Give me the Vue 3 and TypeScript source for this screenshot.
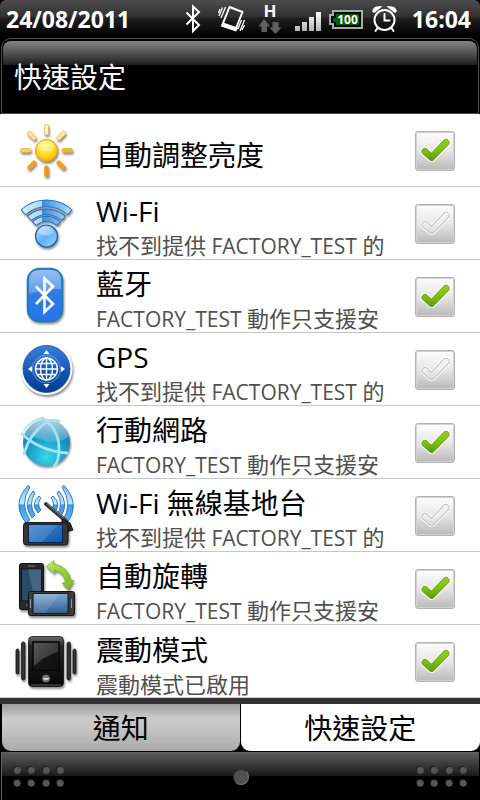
<script setup lang="ts">
import { ref } from 'vue'

interface Setting {
  id: string
  title: string
  note?: string
  on: boolean
}

const settings = ref<Setting[]>([
  { id: 'brightness', title: '自動調整亮度', on: true },
  { id: 'wifi', title: 'Wi-Fi', note: '找不到提供 FACTORY_TEST 的', on: false },
  { id: 'bluetooth', title: '藍牙', note: 'FACTORY_TEST 動作只支援安', on: true },
  { id: 'gps', title: 'GPS', note: '找不到提供 FACTORY_TEST 的', on: false },
  { id: 'mobile', title: '行動網路', note: 'FACTORY_TEST 動作只支援安', on: true },
  { id: 'hotspot', title: 'Wi-Fi 無線基地台', note: '找不到提供 FACTORY_TEST 的', on: false },
  { id: 'rotate', title: '自動旋轉', note: 'FACTORY_TEST 動作只支援安', on: true },
  { id: 'vibrate', title: '震動模式', note: '震動模式已啟用', on: true },
])

// Latin runs are set a little smaller than the Chinese text around them.
const isLatin = (run: string) => /^[\w ]+$/.test(run)
const runsOf = (note: string) => note.split(/( ?[\w]+ ?)/).filter(Boolean)

const activeTab = ref<'notices' | 'quick'>('quick')

const rays = [
  { angle: 0, color: '#fff3c0' },
  { angle: 45, color: '#ffec8a' },
  { angle: 90, color: '#e3c21c' },
  { angle: 135, color: '#f79a1c' },
  { angle: 180, color: '#f98f10' },
  { angle: 225, color: '#fba01e' },
  { angle: 270, color: '#fbd25c' },
  { angle: 315, color: '#ffe49a' },
]

const dotColumns = [5, 19, 34, 48]
const dotRows = [5, 18]
</script>

<template>
  <div class="screen">
    <header class="status">
      <span class="date">24/08/2011</span>
      <div class="status-icons">
        <svg width="30" height="38" viewBox="180 0 30 38" fill="none" stroke="#fff" stroke-width="2">
          <path d="M186.500 12.500L199 25L193 31V6.500L199 12L186.500 24.500" />
        </svg>
        <svg width="42" height="38" viewBox="210 0 42 38" fill="none" stroke="#fff">
          <path d="M229.500 7L242.500 12L235.500 29.500L222.500 24.500Z" stroke-width="2" stroke-linejoin="round" />
          <path d="M223.500 24L236.500 28.500L235.500 30L222.500 25.500Z" stroke-width="2.500" />
          <path d="M225.500 7L221 18M222.500 7.500L219 16M220 9L218.500 13M244.500 20L240 31M244.500 25L242 30M241.500 20L238 29" stroke-width="1.300" />
        </svg>
        <svg width="37" height="38" viewBox="252 0 37 38">
          <text class="net" x="270" y="17" text-anchor="middle">H</text>
          <path d="M264 19L270 26.500H267V32H261.500V26.500H258.500ZM275.500 34L269.500 27.500H272.500V22H278.500V27.500H281.500Z" fill="#606060" />
        </svg>
        <svg width="36" height="38" viewBox="289 0 36 38">
          <defs>
            <linearGradient id="barFill" x1="0" y1="12" x2="0" y2="31" gradientUnits="userSpaceOnUse">
              <stop offset="0" stop-color="#fff" /><stop offset="1" stop-color="#b4b4b4" />
            </linearGradient>
          </defs>
          <path d="M295 26h5v5h-5zM302 22h5v9h-5zM309 17h5v14h-5zM316 12h5v19h-5z" fill="url(#barFill)" />
        </svg>
        <svg width="42" height="38" viewBox="325 0 42 38">
          <path d="M333 11H362V28H333V24H330V15H333Z" fill="#000" stroke="#a9a9a9" stroke-width="2" />
          <path d="M336 14H359V25H336V22H333V18H336Z" fill="#075c07" />
          <text class="charge" x="347.500" y="24" text-anchor="middle">100</text>
        </svg>
        <svg width="37" height="38" viewBox="367 0 37 38" fill="none" stroke="#fff" stroke-width="2" stroke-linecap="round">
          <circle cx="384.500" cy="20" r="10" />
          <path d="M384.500 14V20.500H389.500M377.500 28L375.500 31M391.500 28L393.500 31" />
          <path d="M373.500 11Q374.500 7.500 379 7.500L374 11.500M395.500 11Q394.500 7.500 390 7.500L395 11.500" stroke-width="2.500" />
        </svg>
      </div>
      <time class="clock">16:04</time>
    </header>

    <div class="heading"><h1>快速設定</h1></div>

    <main class="list">
      <label v-for="item in settings" :key="item.id" class="row">
        <svg class="icon" width="92" height="72" viewBox="0 0 92 72" fill="none" aria-hidden="true">
          <g v-if="item.id === 'brightness'">
            <defs>
              <radialGradient id="sunFill" cx=".45" cy=".3" r=".75">
                <stop offset="0" stop-color="#fff48a" /><stop offset=".5" stop-color="#ffe02c" /><stop offset="1" stop-color="#f6a400" />
              </radialGradient>
            </defs>
            <g class="shadow">
              <rect v-for="ray in rays" :key="ray.angle" x="44.500" y="10.500" width="4" height="10.500" rx="1.500" :fill="ray.color" stroke="#e2a53c" stroke-width=".6" :transform="`rotate(${ray.angle} 46.500 36.500)`" />
              <circle cx="46.500" cy="36.500" r="11" fill="url(#sunFill)" stroke="#e59c10" />
            </g>
            <ellipse cx="46" cy="32" rx="8" ry="5.500" fill="#fff" opacity=".3" />
          </g>

          <g v-else-if="item.id === 'wifi'">
            <defs>
              <linearGradient id="wifiFill" x1="20" y1="0" x2="72" y2="0" gradientUnits="userSpaceOnUse">
                <stop offset="0" stop-color="#d5f1ff" /><stop offset=".42" stop-color="#a8dcfc" /><stop offset=".43" stop-color="#2f8ee8" /><stop offset="1" stop-color="#b3e2fe" />
              </linearGradient>
              <linearGradient id="wifiBall" x1="0" y1="0" x2="1" y2="1">
                <stop offset="0" stop-color="#bfe6ff" /><stop offset=".5" stop-color="#5fb2fa" /><stop offset="1" stop-color="#a0d6ff" />
              </linearGradient>
            </defs>
            <g class="shadow" stroke="#2a68ae">
              <path d="M23 25.500A34.500 34.500 0 0 1 70 25.500" stroke-width="7.500" />
              <path d="M29 31.500A26 26 0 0 1 64 31.500" stroke-width="6.500" />
              <path d="M34 37A17.500 17.500 0 0 1 59 37" stroke-width="6" />
              <circle cx="46.500" cy="49" r="11" fill="url(#wifiBall)" stroke="#1761ae" stroke-width="1.200" />
            </g>
            <g stroke="url(#wifiFill)">
              <path d="M23.700 25A34.500 34.500 0 0 1 69.300 25" stroke-width="5.800" />
              <path d="M29.700 31A26 26 0 0 1 63.300 31" stroke-width="4.800" />
              <path d="M34.700 36.400A17.500 17.500 0 0 1 58.300 36.400" stroke-width="4.300" />
            </g>
            <ellipse cx="46" cy="44" rx="7.500" ry="4.500" fill="#fff" opacity=".35" />
          </g>

          <g v-else-if="item.id === 'bluetooth'">
            <defs>
              <linearGradient id="btFill" x1="0" y1="0" x2="0" y2="1">
                <stop offset="0" stop-color="#3b83e0" /><stop offset="1" stop-color="#2276e8" />
              </linearGradient>
              <linearGradient id="btGloss" x1="0" y1="0" x2="0" y2="1">
                <stop offset="0" stop-color="#b5d3f7" /><stop offset="1" stop-color="#6aa3ec" />
              </linearGradient>
            </defs>
            <rect class="shadow" x="27.500" y="8.500" width="35" height="53" rx="12" fill="url(#btFill)" stroke="#1e7db0" stroke-width="1.500" />
            <path d="M29 34V21Q29 10 40 10H50Q61 10 61 21V29Q46 29 29 34Z" fill="url(#btGloss)" opacity=".75" />
            <path d="M36 26.500L53 44L44.500 52V18.500L53 26.500L36 44" stroke="#fff" stroke-width="2.600" />
          </g>

          <g v-else-if="item.id === 'gps'">
            <defs>
              <linearGradient id="gpsFill" x1="0" y1="0" x2="0" y2="1">
                <stop offset="0" stop-color="#3a7edb" /><stop offset=".55" stop-color="#1557b5" /><stop offset="1" stop-color="#043b8d" />
              </linearGradient>
            </defs>
            <circle class="shadow" cx="46.500" cy="36" r="26" fill="#fff" />
            <circle cx="46.500" cy="36" r="23.500" fill="url(#gpsFill)" stroke="#12479c" stroke-width=".8" />
            <g stroke="#fff" stroke-width="1.400">
              <circle cx="46.500" cy="36" r="11" />
              <ellipse cx="46.500" cy="36" rx="6" ry="11" />
              <path d="M46.500 25V47M35.500 36H57.500M37.500 30.500H55.500M37.500 41.500H55.500" />
              <circle cx="46.500" cy="36" r="14" opacity=".35" stroke-width="1" />
            </g>
            <path d="M46.500 17L49.500 21H43.500ZM46.500 55L49.500 51H43.500ZM28 36L32 33V39ZM65 36L61 33V39Z" fill="#fff" />
          </g>

          <g v-else-if="item.id === 'mobile'">
            <defs>
              <radialGradient id="netFill" cx=".5" cy=".8" r=".85">
                <stop offset="0" stop-color="#35d9ed" /><stop offset=".45" stop-color="#1b9fc8" /><stop offset=".8" stop-color="#237bb1" /><stop offset="1" stop-color="#2b6297" />
              </radialGradient>
              <linearGradient id="netGloss" x1="0" y1="0" x2="0" y2="1">
                <stop offset="0" stop-color="#fff" stop-opacity=".7" /><stop offset="1" stop-color="#fff" stop-opacity=".12" />
              </linearGradient>
            </defs>
            <circle class="shadow" cx="46.500" cy="36.500" r="23.500" fill="url(#netFill)" />
            <path d="M24 30Q28 13 46 13Q64 13 69 30Q62 37 48 36Q36 31 24 30Z" fill="url(#netGloss)" />
            <g stroke="#a6e2f5" stroke-width="2.800" stroke-linecap="round">
              <path d="M22 28Q40 45 67 47" />
              <path d="M42 12Q59 22 59 43Q59 56 54 60" />
              <path d="M24 48Q29 29 44 18Q51 13 59 15" />
              <path d="M42 12Q31 14 24 24" stroke-width="1.500" />
            </g>
          </g>

          <g v-else-if="item.id === 'hotspot'">
            <defs>
              <linearGradient id="waveFill" x1="0" y1="6" x2="0" y2="44" gradientUnits="userSpaceOnUse">
                <stop offset="0" stop-color="#72bdf6" /><stop offset=".5" stop-color="#c3e9ff" /><stop offset=".52" stop-color="#3d9bf0" /><stop offset="1" stop-color="#67b8fa" />
              </linearGradient>
              <linearGradient id="hotScreen" x1="0" y1="0" x2="1" y2="1">
                <stop offset="0" stop-color="#3f86d2" /><stop offset="1" stop-color="#1459aa" />
              </linearGradient>
            </defs>
            <g stroke="#1761a5" stroke-width=".8" fill="url(#waveFill)">
              <path d="M28 6.500Q11 25 26 44L30 41Q19 25 30 8Z" />
              <path d="M33 12Q22 25 32 39L35 36Q28 25 35 14Z" />
              <path d="M39 17Q30 25 38 34L41 31Q36 25 41 19Z" />
              <path d="M64 6.500Q81 25 67 44L63 41Q73 25 62 8Z" />
              <path d="M59 12Q70 25 60 39L57 36Q64 25 57 14Z" />
              <path d="M53 17Q62 25 54 34L51 31Q56 25 51 19Z" />
            </g>
            <path d="M46 25L66 42" stroke="#3c3c3c" stroke-width="4" stroke-linecap="round" />
            <path d="M47 24.500L64 39" stroke="#858585" stroke-width="1" />
            <path d="M62 40L70 44L73 51L66 53L62 47Z" fill="#303030" stroke="#111" />
            <rect class="shadow" x="23.500" y="43.500" width="44.500" height="22.500" rx="3" fill="#353638" stroke="#171717" />
            <rect x="28.500" y="45.500" width="34" height="18" fill="url(#hotScreen)" stroke="#0b2545" />
            <path d="M29 46H58L42 63H29Z" fill="#fff" opacity=".13" />
          </g>

          <g v-else-if="item.id === 'rotate'">
            <defs>
              <linearGradient id="rotScreen" x1="0" y1="0" x2="0" y2="1">
                <stop offset="0" stop-color="#7facd4" /><stop offset="1" stop-color="#315f8e" />
              </linearGradient>
              <linearGradient id="arrowFill" x1="0" y1="0" x2="1" y2="1">
                <stop offset="0" stop-color="#bde65c" /><stop offset="1" stop-color="#74b81c" />
              </linearGradient>
            </defs>
            <rect class="shadow" x="19.500" y="11.500" width="24" height="46" rx="2" fill="#292a2c" stroke="#101010" />
            <rect x="21.500" y="17" width="20" height="32" fill="#294a68" stroke="#111" />
            <path d="M28 17H41V41L35 49Z" fill="#7896ad" opacity=".35" />
            <path d="M26 53H37M28 14H35" stroke="#777" />
            <rect class="shadow" x="28.500" y="39.500" width="46" height="24" rx="2" fill="#393a3c" stroke="#151515" />
            <rect x="33" y="41.500" width="35" height="20" fill="url(#rotScreen)" stroke="#111b25" />
            <path d="M34 42H60L45 61H34Z" fill="#fff" opacity=".12" />
            <path d="M71.500 47V56M30.500 47V56" stroke="#999" />
            <path class="shadow" d="M46 14.500L54 8.500L54 12Q68 14 71 29L74 28L68.500 38L62 31L65.500 30.500Q64 20 54 18L55 22Z" fill="url(#arrowFill)" stroke="#72aa24" stroke-width=".6" />
          </g>

          <g v-else>
            <defs>
              <linearGradient id="caseFill" x1="0" y1="0" x2="0" y2="1">
                <stop offset="0" stop-color="#6b6b6b" /><stop offset=".2" stop-color="#252525" /><stop offset="1" stop-color="#050505" />
              </linearGradient>
              <linearGradient id="vibScreen" x1="0" y1="0" x2="1" y2="1">
                <stop offset="0" stop-color="#5a5a5a" /><stop offset="1" stop-color="#252525" />
              </linearGradient>
            </defs>
            <g class="shadow" fill="#333" stroke="#111" stroke-width=".8">
              <rect x="16" y="24" width="3" height="25" rx="1.500" />
              <rect x="21.500" y="17" width="3.500" height="38" rx="1.700" />
              <rect x="67" y="17" width="3.500" height="38" rx="1.700" />
              <rect x="73" y="24" width="3" height="25" rx="1.500" />
              <rect x="28.500" y="11.500" width="35" height="50" rx="4" fill="url(#caseFill)" />
            </g>
            <rect x="33" y="17" width="26" height="28" fill="url(#vibScreen)" stroke="#050505" stroke-width="1.500" />
            <path d="M34 41Q44 31 58 27V44H34Z" fill="#080808" opacity=".75" />
            <circle cx="46" cy="53.500" r="4.500" fill="#777" stroke="#151515" stroke-width="1.500" />
            <path d="M42.500 53A4 4 0 0 0 49.500 53Z" fill="#ddd" />
            <path d="M31 60H61" stroke="#777" stroke-width=".8" />
          </g>
        </svg>

        <span class="text">
          <span class="title">{{ item.title }}</span>
          <span v-if="item.note" class="note"><span v-for="(run, i) in runsOf(item.note)" :key="i" :class="{ latin: isLatin(run) }">{{ run }}</span></span>
        </span>

        <span class="check">
          <input v-model="item.on" type="checkbox" />
          <svg width="40" height="40" viewBox="0 0 40 40" fill="none" stroke-linecap="round" stroke-linejoin="round" aria-hidden="true">
            <defs>
              <linearGradient :id="`tick-${item.id}`" x1="0" y1="8" x2="0" y2="30" gradientUnits="userSpaceOnUse">
                <stop offset="0" :stop-color="item.on ? '#96cd28' : '#f5f5f5'" />
                <stop offset=".55" :stop-color="item.on ? '#7fbd12' : '#ededed'" />
                <stop offset="1" :stop-color="item.on ? '#5b9411' : '#d9d9d9'" />
              </linearGradient>
            </defs>
            <path d="M10 20.500L16.500 26.500L31 11.500" stroke="#fff" stroke-width="9" />
            <path d="M10 20.500L16.500 26.500L31 11.500" :stroke="item.on ? '#6ca318' : '#b0b0b0'" stroke-width="7" />
            <path d="M10 20.500L16.500 26.500L31 11.500" :stroke="`url(#tick-${item.id})`" stroke-width="5.500" />
          </svg>
        </span>
      </label>
    </main>

    <nav class="tabs">
      <button type="button" :class="{ active: activeTab === 'notices' }" @click="activeTab = 'notices'">通知</button>
      <button type="button" :class="{ active: activeTab === 'quick' }" @click="activeTab = 'quick'">快速設定</button>
    </nav>

    <footer class="handle">
      <svg v-for="side in 2" :key="side" class="dots" width="54" height="24" viewBox="0 0 54 24" aria-hidden="true">
        <template v-for="y in dotRows" :key="y">
          <g v-for="x in dotColumns" :key="x">
            <circle :cx="x" :cy="y" r="3.500" fill="#8a8a8a" />
            <circle :cx="x - 0.5" :cy="y - 0.5" r="3.500" fill="#1b1b1b" />
            <circle :cx="x" :cy="y" r="3" fill="#585858" />
          </g>
        </template>
      </svg>
      <span class="knob"></span>
    </footer>
  </div>
</template>

<style>
body {
  margin: 0;
  background: #000;
}
</style>

<style scoped>
.screen {
  display: flex;
  flex-direction: column;
  min-height: 100vh;
  background: #000;
  color: #000;
  font-family: "Open Sans", "Noto Sans CJK TC", sans-serif;
}

.status {
  display: flex;
  align-items: center;
  height: 38px;
  padding: 0 9px 0 6px;
  border-radius: 6px 6px 0 0;
  background: linear-gradient(#4c4c4c, #303030 17px, #202020 18px, #000 36px);
  color: #fff;
  font-size: 23px;
  font-weight: 700;
  line-height: 38px;
}

.status-icons {
  display: flex;
  margin: 0 8px 0 auto;
}

.net,
.charge {
  fill: #fff;
  font-weight: 700;
}

.net {
  font-family: Roboto, sans-serif;
  font-size: 17px;
}

.charge {
  font-size: 12px;
}

.heading {
  box-sizing: border-box;
  height: 76px;
  margin: 0 1px;
  padding: 2px 1px 0;
  border: 1px solid #4c4c4c;
  border-radius: 10px 10px 0 0;
}

.heading h1 {
  height: 72px;
  margin: 0;
  padding-left: 11px;
  border-radius: 8px 8px 0 0;
  background: linear-gradient(#868686, #1e1e1e 24px, #000 24px);
  color: #fff;
  font-size: 28px;
  font-weight: 400;
  line-height: 72px;
}

.list {
  flex: 1;
  background: #fff;
}

.row {
  display: flex;
  align-items: center;
  height: 72px;
  padding-right: 25px;
  border-bottom: 1px solid #c6c6c6;
}

.icon {
  flex: none;
}

.shadow {
  filter: drop-shadow(1px 2px 1px rgba(0, 0, 0, 0.45));
}

.text {
  flex: 1;
  min-width: 0;
  padding: 9px 0 0 4px;
  white-space: nowrap;
}

.title,
.note {
  display: block;
}

.title {
  font-size: 28px;
  line-height: 36px;
}

.note {
  color: #505050;
  font-size: 22px;
  line-height: 32px;
  white-space: pre;
}

.latin {
  font-size: 21px;
}

.check {
  display: grid;
  flex: none;
  padding-top: 1px;
}

.check input,
.check svg {
  grid-area: 1 / 1;
}

.check input {
  width: 40px;
  height: 40px;
  margin: 0;
  appearance: none;
  border: 1px solid #b2b2b2;
  border-radius: 3px;
  background: linear-gradient(#fdfdfd, #e6e6e6 50%, #b9b9b9);
  box-shadow: inset 0 0 0 1px #d2d2d2;
}

.check svg {
  pointer-events: none;
}

.tabs {
  display: grid;
  grid-template-columns: 1fr 1fr;
  gap: 1px;
  padding-bottom: 1px;
  border-top: 6px solid #333;
}

.tabs button {
  height: 47px;
  padding: 0;
  border: 0;
  border-radius: 0 0 9px 9px;
  background: linear-gradient(#9c9c9c, #cbcbcb 30%, #c6c6c6 50%, #aaa);
  color: #000;
  font: inherit;
  font-size: 28px;
  line-height: 44px;
}

.tabs button:first-child {
  margin-left: 2px;
}

.tabs button.active {
  background: #fff;
}

.handle {
  box-sizing: border-box;
  display: flex;
  align-items: center;
  justify-content: space-between;
  height: 48px;
  margin: 0 1px;
  padding: 0 10px;
  border: solid #606060;
  border-width: 1px 0 0 1px;
  background: linear-gradient(#5a5a5a, #191919 23px, #000 23px);
}

.knob {
  order: 1;
  width: 14px;
  height: 14px;
  border: 1px solid #2e2e2e;
  border-right-color: #777;
  border-bottom-color: #777;
  border-radius: 50%;
  background: #505050;
}

.dots:nth-of-type(2) {
  order: 2;
}
</style>
